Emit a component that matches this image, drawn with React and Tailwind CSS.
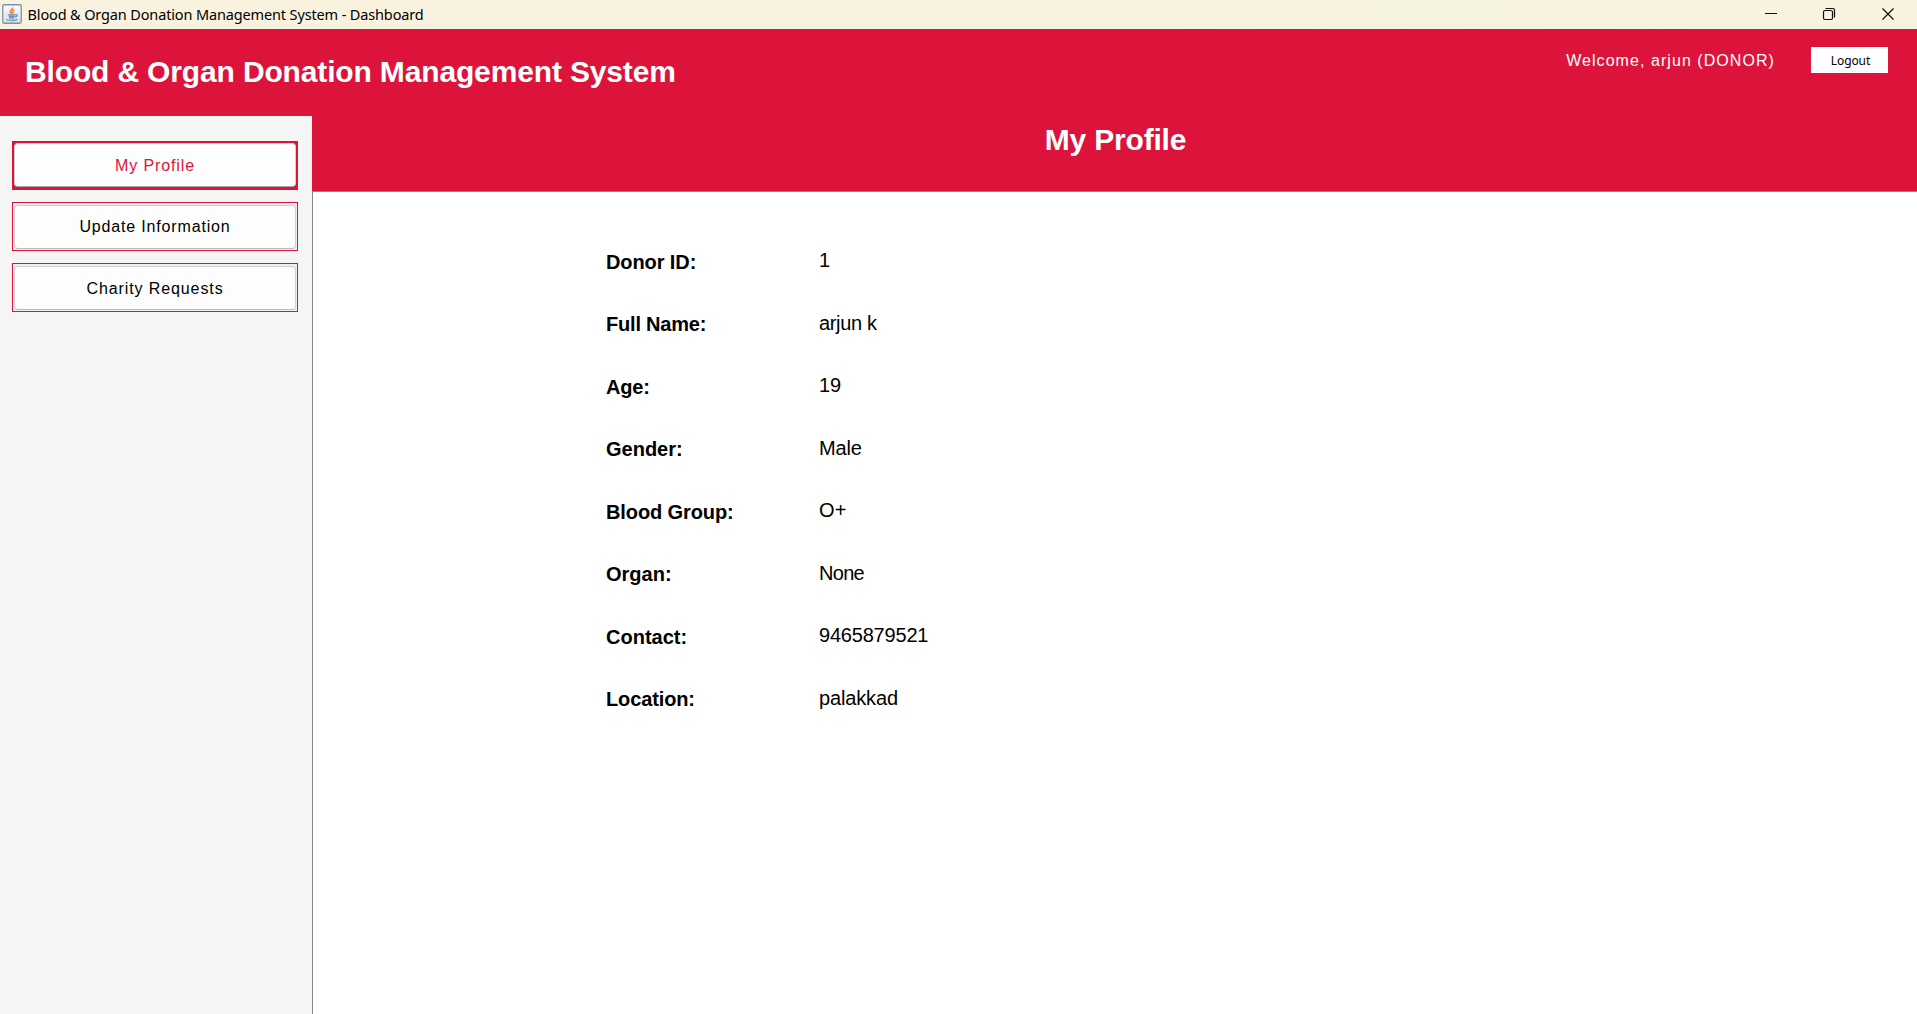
const fields = [
  ["Donor ID:", "1", "tracking-[-0.1px]", "tracking-[0px]"],
  ["Full Name:", "arjun k", "tracking-[-0.2px]", "tracking-[-0.35px]"],
  ["Age:", "19", "tracking-[-0.2px]", "tracking-[0px]"],
  ["Gender:", "Male", "tracking-[0px]", "tracking-[-0.2px]"],
  ["Blood Group:", "O+", "tracking-[-0.1px]", "tracking-[0.3px]"],
  ["Organ:", "None", "tracking-[0px]", "tracking-[-0.7px]"],
  ["Contact:", "9465879521", "tracking-[0px]", "tracking-[-0.2px]"],
  ["Location:", "palakkad", "tracking-[-0.12px]", "tracking-[-0.15px]"],
];

function JavaIcon() {
  return (
    <svg width="20" height="20" viewBox="0 0 20 20" className="mb-[2px] ml-[2px] shrink-0">
      <defs>
        <linearGradient id="tile" x1="0" y1="0" x2="0" y2="1">
          <stop offset="0" stopColor="#fbfcfd" />
          <stop offset="1" stopColor="#d8dfe6" />
        </linearGradient>
      </defs>
      <rect x="0.75" y="0.75" width="18.5" height="18.5" rx="1.5" fill="url(#tile)" stroke="#7d93ab" strokeWidth="1.3" />
      <path d="M10.6 3.5c.8 1.600-2.600 2.300-2.400 4.100.1.900 1 1.500 1.500 2.200M12.300 5.900c-2.200.9-2.300 1.800-1.500 2.800.3.500.1.900-.3 1.300" fill="none" stroke="#e98a3c" strokeWidth="1.600" />
      <path d="M5.800 10.800h7.600M6.700 12.500h6M7.200 14.200h5M13.500 10.700c2.300-.4 2.200 1.900-.4 2.400" fill="none" stroke="#6c8fae" strokeWidth="1.300" />
      <path d="M4.300 15.400c1.200 1.200 9.300 1.200 11.200 0" fill="none" stroke="#6c8fae" strokeWidth="1.200" />
    </svg>
  );
}

function TitleBar() {
  return (
    <div className="flex h-[29px] shrink-0 items-center bg-linear-to-r from-[#f9f2df] from-60% via-[#f5f3e0] via-75% to-[#f9f2df] to-90% font-['Noto_Sans','Open_Sans',sans-serif]">
      <JavaIcon />
      <span className="ml-[5.5px] text-[14.5px] leading-[27px] tracking-[-0.14px] whitespace-nowrap text-black">
        Blood &amp; Organ Donation Management System - Dashboard
      </span>
      <svg width="130" height="29" viewBox="0 0 130 29" className="mr-[22px] ml-auto shrink-0" fill="none" stroke="#111">
        <path d="M0 13.500h12" />
        <rect x="58.500" y="10.500" width="9" height="9" rx="1.500" strokeWidth="1.200" />
        <path d="M60.500 8.500h7.500q1.500 0 1.500 1.500v7.500" strokeWidth="1.200" />
        <path d="M117.500 8.500l11 11M128.500 8.500l-11 11" strokeWidth="1.200" />
      </svg>
    </div>
  );
}

function Header() {
  return (
    <header className="flex h-[87px] shrink-0 items-start bg-[#dc143c] text-white">
      <h1 className="mt-[25px] ml-[25px] text-[30px] leading-[36px] font-bold tracking-[-0.15px] whitespace-nowrap">
        Blood &amp; Organ Donation Management System
      </h1>
      <span className="mt-[22px] ml-auto text-[16px] leading-[20px] tracking-[1.06px] whitespace-nowrap">
        Welcome, arjun (DONOR)
      </span>
      <button className="mt-[18px] mr-[29px] ml-[36px] h-[26px] w-[77px] bg-white pt-px pl-[2px] font-['Noto_Sans',sans-serif] text-[12px] leading-[25px] tracking-[-0.1px] text-black">
        Logout
      </button>
    </header>
  );
}

function NavButton({ children, active, textClass }) {
  return (
    <button
      className={
        active
          ? "h-[49px] w-[286px] border-2 border-b-[3px] border-[#dc143c] bg-[#dc143c] text-[#dc143c]"
          : "h-[49px] w-[286px] border border-[#dc143c] bg-[#f0f0f0] px-px pt-[2px] pb-px text-black"
      }
    >
      <span
        className={
          (active ? "border-b-[#a8a8ae] " : "border-b-[#bbbbbb] ") +
          "flex h-full items-center justify-center rounded-[4px] border border-[#d0d0d0] bg-[#fdfdfd] text-[16px] " +
          textClass
        }
      >
        {children}
      </span>
    </button>
  );
}

export default function App() {
  return (
    <div className="flex h-[1014px] w-[1917px] flex-col overflow-hidden bg-white font-['Liberation_Sans',Arial,sans-serif]">
      <TitleBar />
      <Header />
      <div className="flex min-h-0 flex-1">
        <aside className="flex w-[312px] shrink-0 flex-col gap-[12px] bg-[#f5f5f5] pt-[25px] pl-[12px]">
          <NavButton active textClass="pt-[2px] tracking-[0.9px]">My Profile</NavButton>
          <NavButton textClass="pb-px tracking-[0.84px]">Update Information</NavButton>
          <NavButton textClass="pt-px tracking-[0.9px]">Charity Requests</NavButton>
        </aside>
        <main className="flex flex-1 flex-col">
          <div className="flex h-[75px] justify-center bg-[#dc143c] pt-[6px] pl-[2px] text-[30px] leading-[36px] font-bold tracking-[-0.2px] text-white">
            <h2>My Profile</h2>
          </div>
          <div className="flex-1 border-t border-l border-[#828790] pt-[38px] pl-[293px]">
            {fields.map(([label, value, labelTracking, valueTracking]) => (
              <div key={label} className="flex h-[62.5px] items-start text-[20px] leading-[24px] text-black">
                <span className={"w-[213px] pt-[19.6px] font-bold " + labelTracking}>{label}</span>
                <span className={"pt-[18px] " + valueTracking}>{value}</span>
              </div>
            ))}
          </div>
        </main>
      </div>
    </div>
  );
}
